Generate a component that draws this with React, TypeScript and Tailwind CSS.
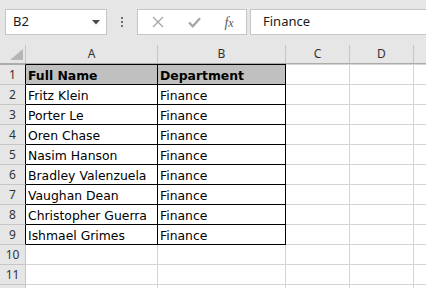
const people = [
  "Fritz Klein",
  "Porter Le",
  "Oren Chase",
  "Nasim Hanson",
  "Bradley Valenzuela",
  "Vaughan Dean",
  "Christopher Guerra",
  "Ishmael Grimes",
];

const cellFont = { fontFamily: '"DejaVu Sans", Verdana, sans-serif' };
const uiFont = { fontFamily: '"Noto Sans", "Open Sans", sans-serif' };

function Toolbar() {
  return (
    <div className="h-[45px] flex items-start pt-[9px] pl-[5px]" style={uiFont}>
      <div className="w-[102px] h-[26px] bg-white border border-[#c6c6c6] flex items-center pl-[7px] pr-[6px] justify-between">
        <span className="text-[13px] text-[#1a1a1a]">B2</span>
        <svg width="8" height="5" viewBox="0 0 8 5">
          <path d="M0 0 H8 L4 4.5 Z" fill="#4a4a4a" />
        </svg>
      </div>
      <div className="w-[30px] h-[26px] flex flex-col items-center justify-center gap-[2px]">
        <span className="w-[2px] h-[2px] bg-[#6f6f6f]" />
        <span className="w-[2px] h-[2px] bg-[#6f6f6f]" />
        <span className="w-[2px] h-[2px] bg-[#6f6f6f]" />
      </div>
      <div className="w-[110px] h-[26px] bg-white border border-[#c6c6c6] flex items-center">
        <div className="w-[38px] flex justify-center pl-[1px]">
          <svg width="12" height="12" viewBox="0 0 12 12">
            <path d="M1 1 L11 11 M11 1 L1 11" stroke="#a6a6a6" strokeWidth="1.3" fill="none" />
          </svg>
        </div>
        <div className="w-[36px] flex justify-center">
          <svg width="13" height="11" viewBox="0 0 13 11">
            <path d="M1 5.5 L4.8 9.3 L12 1.2" stroke="#a6a6a6" strokeWidth="2.3" fill="none" />
          </svg>
        </div>
        <div className="w-[34px] flex justify-center">
          <span
            className="italic text-[14px] text-[#5a5a5a]"
            style={{ fontFamily: '"Liberation Serif", serif' }}
          >
            f<span className="text-[12px]">x</span>
          </span>
        </div>
      </div>
      <div className="ml-[3px] flex-1 h-[26px] bg-white border border-[#c6c6c6] border-r-0 flex items-center pl-[12px]">
        <span className="text-[13px] text-[#1a1a1a]">Finance</span>
      </div>
    </div>
  );
}

function ColumnHeaders() {
  const cols = [
    { label: "A", w: "w-[132px]" },
    { label: "B", w: "w-[128px]" },
    { label: "C", w: "w-[64px]" },
    { label: "D", w: "w-[64px]" },
  ];
  return (
    <div className="flex h-[19px] border-b border-[#ababab]" style={uiFont}>
      <div className="w-[26px] shrink-0 border-r border-[#c6c6c6] flex justify-end items-end pr-[2px] pb-[3px]">
        <svg width="13" height="11" viewBox="0 0 13 11">
          <path d="M13 0 V11 H0 Z" fill="#b5b5b5" />
        </svg>
      </div>
      {cols.map((c) => (
        <div
          key={c.label}
          className={`${c.w} shrink-0 border-r border-[#c6c6c6] flex items-center justify-center text-[12px] text-[#333]`}
        >
          {c.label}
        </div>
      ))}
      <div className="flex-1" />
    </div>
  );
}

function Row({ n, a, b, header, hideNumber }: { n: number; a?: string; b?: string; header?: boolean; hideNumber?: boolean }) {
  const inTable = n <= 9;
  const first = n === 1;
  const cellBase = "h-full shrink-0 flex items-end pl-[2px] pb-[1px] leading-[15px] text-[12.4px] text-black";
  return (
    <div className={`flex ${first ? "h-[21px]" : "h-[20px]"}`}>
      <div
        className={`w-[26px] shrink-0 border-r border-b flex items-center justify-center text-[12px] text-[#333] ${
          inTable ? "border-r-black border-b-[#c6c6c6]" : "border-[#c6c6c6]"
        } ${first ? "border-t border-t-[#ababab]" : ""}`}
        style={uiFont}
      >
        {hideNumber ? null : n}
      </div>
      <div
        className={`w-[132px] ${cellBase} border-r border-b ${
          inTable ? "border-black" : "border-[#d4d4d4]"
        } ${first ? "border-t border-t-black" : ""} ${header ? "bg-[#c0c0c0] font-bold" : "bg-white"}`}
        style={cellFont}
      >
        {a}
      </div>
      <div
        className={`w-[128px] ${cellBase} border-r border-b ${
          inTable ? "border-black" : "border-[#d4d4d4]"
        } ${first ? "border-t border-t-black" : ""} ${header ? "bg-[#c0c0c0] font-bold" : "bg-white"}`}
        style={cellFont}
      >
        {b}
      </div>
      <div
        className={`w-[64px] h-full shrink-0 bg-white border-r border-b border-[#d4d4d4] ${
          first ? "border-t border-t-[#d4d4d4]" : ""
        }`}
      />
      <div
        className={`w-[64px] h-full shrink-0 bg-white border-r border-b border-[#d4d4d4] ${
          first ? "border-t border-t-[#d4d4d4]" : ""
        }`}
      />
      <div
        className={`flex-1 h-full bg-white border-b border-[#d4d4d4] ${
          first ? "border-t border-t-[#d4d4d4]" : ""
        }`}
      />
    </div>
  );
}

export default function App() {
  return (
    <div className="w-[426px] h-[288px] bg-[#e6e6e6] overflow-hidden">
      <Toolbar />
      <ColumnHeaders />
      <Row n={1} a="Full Name" b="Department" header />
      {people.map((p, i) => (
        <Row key={p} n={i + 2} a={p} b="Finance" />
      ))}
      <Row n={10} />
      <Row n={11} />
      <Row n={12} hideNumber />
    </div>
  );
}
